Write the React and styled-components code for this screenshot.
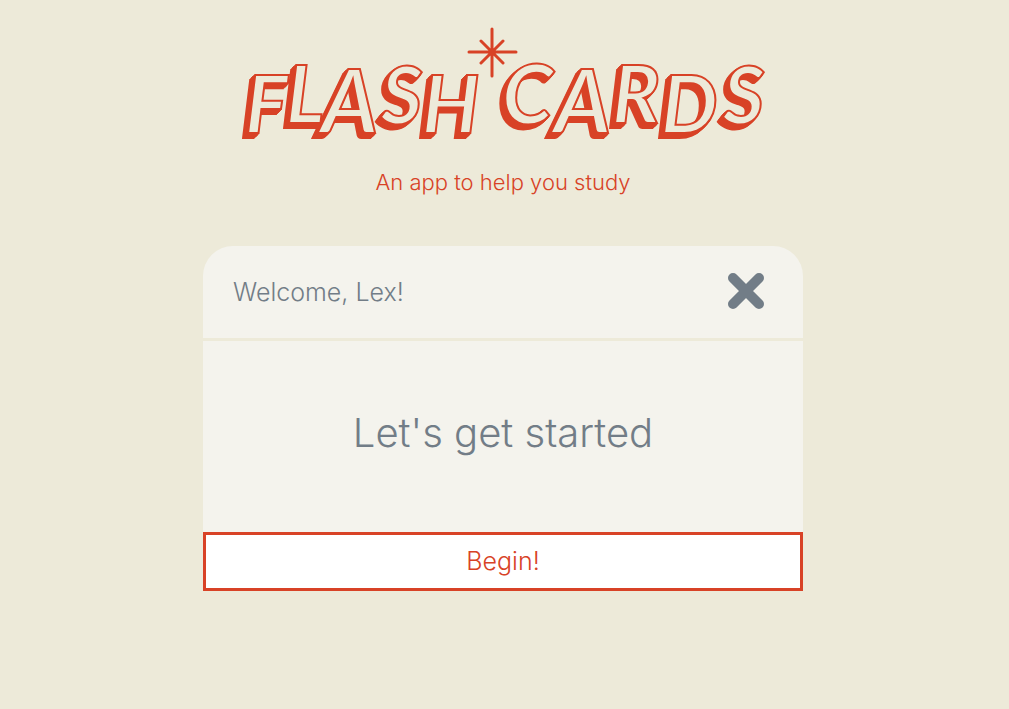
import React from "react";
import styled, { createGlobalStyle } from "styled-components";

const red = "#d84226";
const slate = "#727d87";
const cream = "#edead9";
const paper = "#f4f3ed";

const GlobalStyle = createGlobalStyle`
  *, *::before, *::after { box-sizing: border-box; }
  body {
    margin: 0;
    background: ${cream};
    color: ${slate};
    font-family: "Century Gothic", Inter, sans-serif;
    font-weight: 300;
  }
`;

const Page = styled.main`
  min-height: 100vh;
  padding: 24px 3px 24px 0;
  display: flex;
  flex-direction: column;
  align-items: center;
`;

const Title = styled.h1`
  margin: 0;
  width: 100%;
  max-width: 528px;
  line-height: 0;
`;

const Logo = styled.svg`
  display: block;
  width: 100%;
  height: auto;
  overflow: visible;
`;

const Lettering = styled.text`
  font-family: Lato, sans-serif;
  font-style: italic;
  font-weight: 700;
  fill: ${cream};
  stroke: ${red};
  stroke-width: 2px;
  stroke-linejoin: miter;
  filter: drop-shadow(-1px 1px 0 ${red}) drop-shadow(-2px 2px 0 ${red})
    drop-shadow(-2px 2px 0 ${red});
`;

const Star = styled.path`
  fill: none;
  stroke: ${red};
  stroke-width: 3px;
  stroke-linecap: round;
`;

const Tagline = styled.p`
  margin: 8px 0 48px;
  font-size: 22px;
  line-height: 32px;
  text-align: center;
  color: ${red};
`;

const Card = styled.section`
  width: 100%;
  max-width: 600px;
`;

const CardHeader = styled.header`
  display: flex;
  align-items: center;
  justify-content: space-between;
  padding: 24px 36px 24px 30px;
  background: ${paper};
  border-radius: 30px 30px 0 0;
  font-size: 25px;
  line-height: 44px;
`;

const CloseButton = styled.button`
  display: flex;
  padding: 0;
  border: 0;
  background: none;
  color: ${slate};
  cursor: pointer;
`;

const CardBody = styled.div`
  margin-top: 3px;
  padding: 60px 24px 68px;
  background: ${paper};
  text-align: center;
`;

const Heading = styled.h2`
  margin: 0;
  font-size: 40px;
  font-weight: inherit;
  line-height: 63px;
`;

const BeginButton = styled.button`
  display: block;
  width: 100%;
  padding: 12px;
  border: 3px solid ${red};
  background: #fff;
  color: ${red};
  font: inherit;
  font-size: 25px;
  line-height: 29px;
  cursor: pointer;
`;

const letters = [
  ["F", 6, 109, 80],
  ["L", 47, 99, 80],
  ["A", 82, 109, 88],
  ["S", 142, 100, 80],
  ["H", 183, 109, 80],
  ["C", 263, 100, 82],
  ["A", 315, 109, 88],
  ["R", 373, 99, 80],
  ["D", 422, 109, 80],
  ["S", 484, 100, 80],
];

export default function App() {
  return (
    <>
      <GlobalStyle />
      <Page>
        <Title>
          <Logo viewBox="0 0 528 134" role="img" aria-label="Flash Cards">
            <Lettering>
              {letters.map(([char, x, y, size]) => (
                <tspan key={x} x={x} y={y} fontSize={size}>
                  {char}
                </tspan>
              ))}
            </Lettering>
            <Star d="M253 5v47M230 28h47M242 17l22 22M264 17l-22 22" />
          </Logo>
        </Title>
        <Tagline>An app to help you study</Tagline>
        <Card>
          <CardHeader>
            <span>Welcome, Lex!</span>
            <CloseButton type="button" aria-label="Close">
              <svg width="42" height="42" viewBox="0 0 42 42" aria-hidden="true">
                <path
                  d="M8 7l26 26M34 7L8 33"
                  fill="none"
                  stroke="currentColor"
                  strokeWidth="10"
                  strokeLinecap="round"
                />
              </svg>
            </CloseButton>
          </CardHeader>
          <CardBody>
            <Heading>Let's get started</Heading>
          </CardBody>
          <BeginButton type="button">Begin!</BeginButton>
        </Card>
      </Page>
    </>
  );
}
